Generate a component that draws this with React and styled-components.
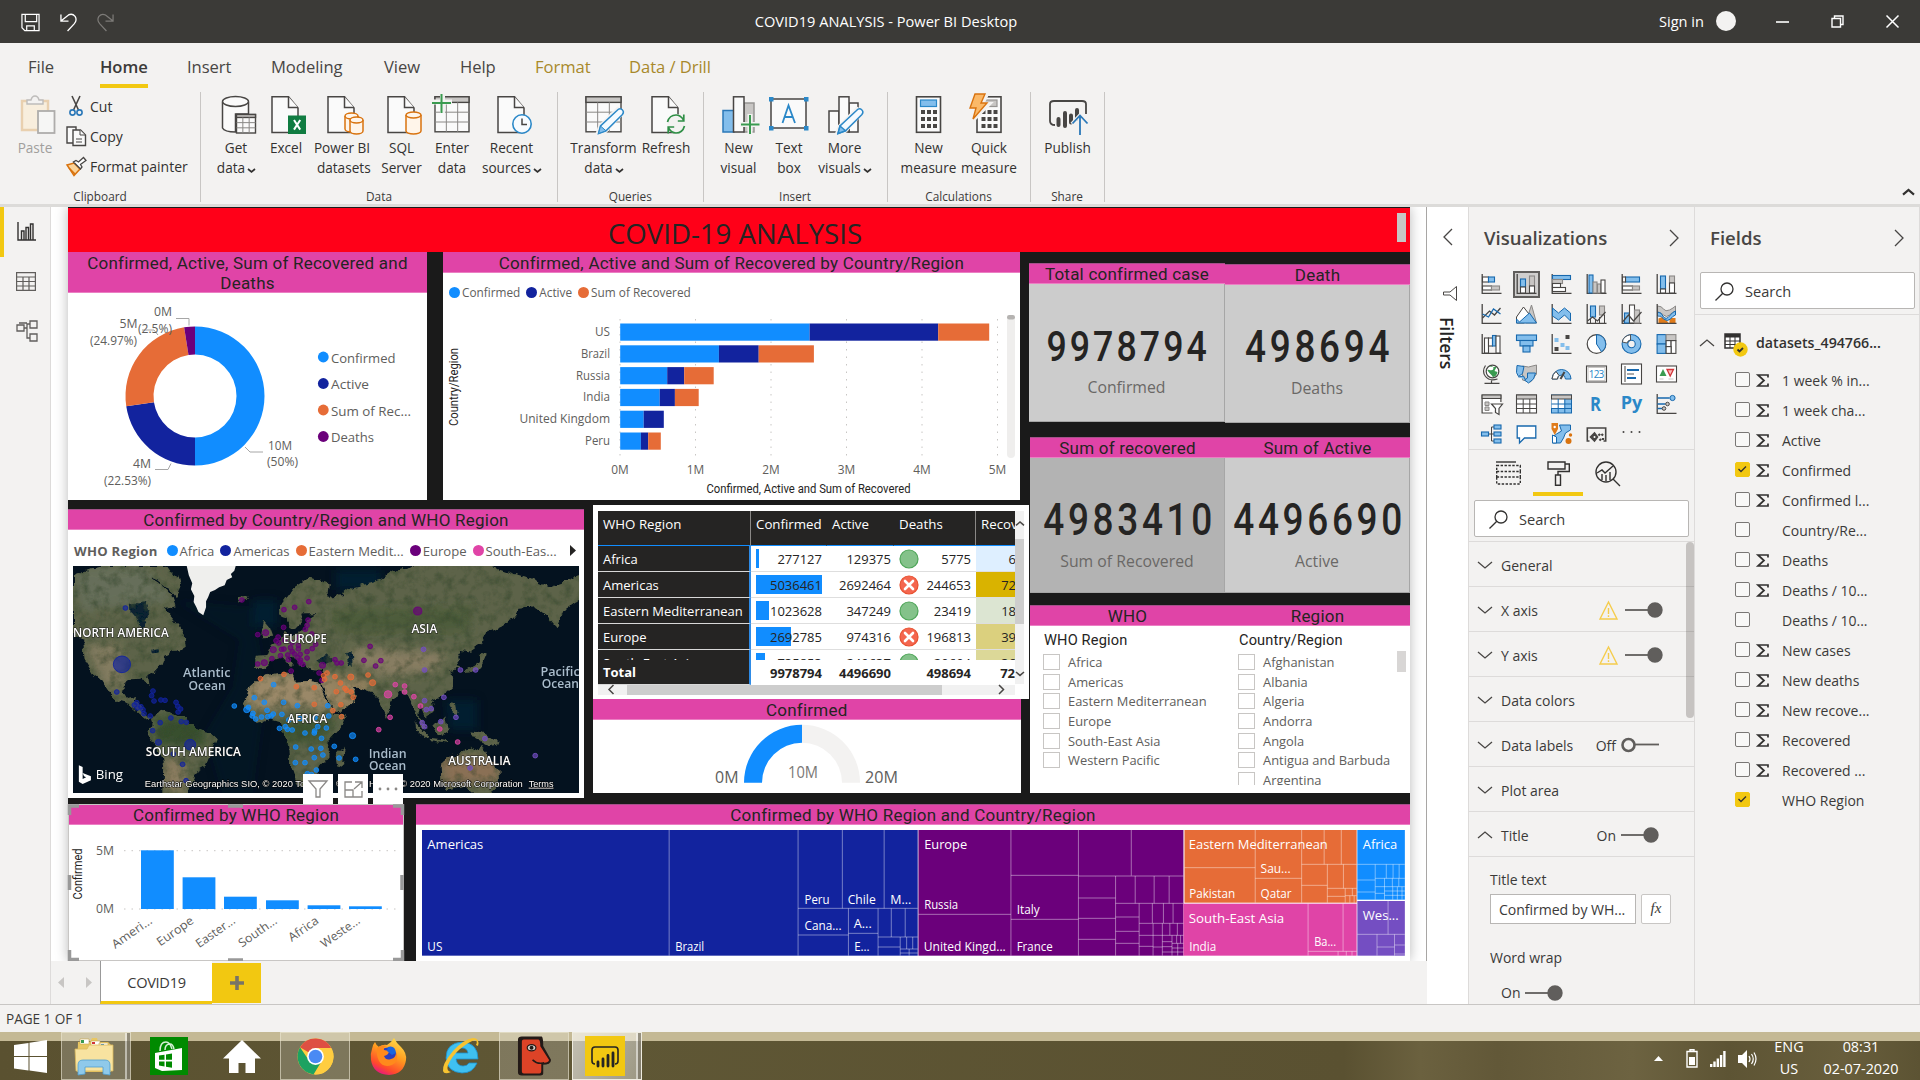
import React from "react";
import styled, { createGlobalStyle, css } from "styled-components";

const UI = `"Open Sans", "Noto Sans", sans-serif`;
const DIN = `Roboto, "Liberation Sans", sans-serif`;
const C = {
  blue: "#118dff", navy: "#12239e", orange: "#e66c37", purple: "#6b007b",
  pink: "#e044a7", violet: "#744ec2", ink: "#252423", grey: "#605e5c",
  pane: "#f3f2f1", line: "#dddbda", yellow: "#f2c811", page: "#1a1a1a",
};

const Global = createGlobalStyle`
  * { box-sizing: border-box; }
  body { margin: 0; background: ${C.pane}; font-family: ${UI}; color: ${C.ink}; overflow: hidden; }
  svg { display: block; overflow: visible; flex: none; }
`;

/* ---------- shell ---------- */
const Shell = styled.div`width: 1920px; height: 1080px; display: flex; flex-direction: column; overflow: hidden;`;
const TitleBar = styled.header`
  height: 43px; flex: none; background: #3b3a37; color: #fff; display: grid;
  grid-template-columns: 1fr auto 1fr; align-items: center; font-size: 14.6px; padding-bottom: 1px;
`;
const QuickTools = styled.div`display: flex; align-items: center; gap: 20px; padding: 3px 0 0 21px;`;
const Caption = styled.div`white-space: nowrap; transform: translateX(-74px);`;
const WindowTools = styled.div`display: flex; align-items: center; justify-content: flex-end; padding-right: 21px;`;
const Avatar = styled.span`width: 20px; height: 20px; border-radius: 50%; background: #f3f2f1; margin: 0 40px 0 12px;`;
const WinGlyph = styled.span`margin-left: ${p => p.$gap || 0}px;`;

const Ribbon = styled.section`height: 161px; flex: none; background: ${C.pane}; display: flex; flex-direction: column;`;
const Tabs = styled.nav`
  height: 48px; padding-left: 28px; display: grid; align-items: start;
  grid-template-columns: 72px 87px 84px 113px 76px 75px 94px auto;
  font-size: 16.6px; color: #484644;
`;
const Tab = styled.span`
  justify-self: start; height: 45px; line-height: 47px; white-space: nowrap; letter-spacing: -0.05px;
  color: ${p => (p.$gold ? "#a8892b" : "#484644")};
  ${p => p.$on && css`font-weight: 600; color: #3b3a39; border-bottom: 4px solid ${C.yellow}; letter-spacing: -0.1px;`}
`;
const Groups = styled.div`display: flex; height: 111px; padding-top: 1px; align-items: stretch;`;
const Group = styled.div`
  width: ${p => p.$w}px; border-right: 1px solid #c8c6c4; display: flex; flex-direction: column;
`;
const GroupBody = styled.div`height: 94px; flex: none; display: flex; padding-left: ${p => p.$pad}px;`;
const GroupName = styled.div`font-size: 11.8px; line-height: 20px; text-align: center; color: #3b3a39;`;
const BigButton = styled.div`
  width: ${p => p.$w}px; padding-top: 3px; display: flex; flex-direction: column; align-items: center;
  color: ${p => (p.$off ? "#a19f9d" : "#323130")};
`;
const BigLabel = styled.div`
  margin-top: 3px; font-size: 13.6px; line-height: 20.3px; text-align: center; white-space: pre;
  display: flex; flex-direction: column; align-items: center;
`;
const SmallList = styled.div`display: flex; flex-direction: column; padding-left: 5px;`;
const SmallButton = styled.div`
  height: 30px; display: flex; align-items: center; gap: 4px; font-size: 14px; white-space: nowrap; color: #323130; padding-bottom: 2px;
`;
const SmallIcon = styled.span`width: 21px; display: flex; justify-content: center;`;
const RibbonEnd = styled.div`flex: 1; display: flex; align-items: flex-end; justify-content: flex-end; padding: 0 6px 7px 0;`;

const Body = styled.main`
  flex: 1; min-height: 0; display: flex; border-top: 3px solid #dcdbd9;
`;
const Rail = styled.aside`width: 51px; flex: none; border-right: 1px solid ${C.line}; display: flex; flex-direction: column;`;
const RailItem = styled.div`
  height: 49.5px; display: flex; align-items: center; padding-left: ${p => (p.$on ? 13 : 16)}px;
  ${p => p.$on && css`border-left: 4px solid ${C.yellow};`}
`;
const Work = styled.div`width: 1376px; flex: none; display: flex; flex-direction: column;`;
const Stage = styled.div`
  height: 754px; background: #fff; padding: 0 16px 0 17px; border-right: 1px solid #a8a6a4; overflow: hidden;
`;
const PageTabs = styled.div`height: 43px; display: flex; align-items: stretch;`;
const PageArrows = styled.div`width: 49px; display: flex; align-items: center; gap: 22px; padding-left: 7px;`;
const PageTab = styled.div`
  width: 112px; background: #fff; border-bottom: 3px solid ${C.yellow}; border-left: 1px solid #999;
  font-size: 14.6px; color: #3b3a39; display: flex; align-items: center; justify-content: center; letter-spacing: -0.3px; padding-top: 2px;
`;
const AddPage = styled.div`
  width: 49px; margin: 2px 0 1px; background: ${C.yellow}; display: flex; align-items: center; justify-content: center;
`;
const StatusBar = styled.footer`
  height: 28px; flex: none; border-top: 1px solid #c8c6c4; background: ${C.pane}; color: #3b3a39;
  font-size: 13.6px; line-height: 28px; padding-left: 6px; letter-spacing: -0.05px;
`;

/* ---------- report page ---------- */
const Page = styled.div`
  width: 1342px; height: 754px; background: ${C.page}; box-shadow: 0 0 12px rgba(0,0,0,.28);
  display: flex; flex-direction: column; border-top: 1px solid #1a1a1a;
`;
const Banner = styled.div`
  height: 44px; flex: none; background: #ff0018; display: flex; justify-content: flex-end; align-items: flex-start;
`;
const BannerText = styled.div`flex: 1; text-align: center; font-size: 27.6px; line-height: 50px; padding-left: 5px;`;
const Thumb = styled.span`width: 9px; height: ${p => p.$h}px; margin: ${p => p.$m}; background: ${p => p.$c || "#c8c6c4"};`;
const Upper = styled.div`height: 552px; flex: none; display: flex;`;
const LeftArea = styled.div`width: 961px; display: flex; flex-direction: column;`;
const RowTop = styled.div`height: 248px; display: flex; gap: 16px;`;
const RowMid = styled.div`display: flex; gap: 9px; padding-top: 5px;`;
const Stack = styled.div`display: flex; flex-direction: column;`;
const RightArea = styled.div`width: 381px; display: flex; flex-direction: column; padding-top: 11px;`;
const Pair = styled.div`display: flex; margin-left: ${p => p.$ml || 0}px; margin-bottom: ${p => p.$mb || 0}px;`;
const LowerRow = styled.div`flex: 1; min-height: 0; display: flex; gap: 12px;`;

const Visual = styled.section`
  position: relative; width: ${p => p.$w}px; height: ${p => p.$h}px; margin-top: ${p => p.$mt || 0}px;
  background: ${p => p.$bg || "#fff"}; display: flex; flex-direction: column; flex: none;
`;
const VisualTitle = styled.h2`
  margin: 0; background: ${C.pink}; color: ${C.ink}; font: 400 17px/20px ${DIN};
  letter-spacing: 0.23px; text-align: center; padding: 1px ${p => p.$px || 0}px 0; white-space: ${p => (p.$wrap ? "normal" : "nowrap")};
  flex: none; border-bottom: 1px solid #eb7fc3; height: ${p => (p.$wrap ? 41 : 21)}px;
  box-shadow: ${p => (p.$line ? "inset 0 1px 0 #a5508a" : "none")};
`;

/* ---------- cards and slicers ---------- */
const CardBody = styled.div`flex: 1; display: flex; flex-direction: column; align-items: center; padding-top: 38px; border: 0 solid #a6a6a6; border-width: 0 1px 1px 0;`;
const CardNumber = styled.div`
  font: 500 ${p => p.$size}px/50px ${DIN}; letter-spacing: ${p => p.$ls}px; margin-right: -${p => p.$ls}px; color: ${C.ink};
  transform: scaleX(.85);
`;
const CardLabel = styled.div`font-size: 15.8px; line-height: 24px; margin-top: 3px; color: #6a6866;`;
const SlicerHead = styled.div`font: 400 14.6px/22px ${DIN}; padding: 3px 0 0 14px; letter-spacing: .15px;`;
const SlicerBody = styled.div`display: flex; height: 134px; overflow: hidden;`;
const SlicerList = styled.div`flex: 1; padding: 1px 0 0 13px;`;
const SlicerItem = styled.div`
  height: 19.7px; display: flex; align-items: center; gap: 8px; font-size: 12.9px; color: ${C.grey}; white-space: nowrap;
  &::before { content: ""; width: 15px; height: 14px; border: 1px solid #c8c6c4; background: #fff; flex: none; }
`;

/* ---------- matrix ---------- */
const Matrix = styled.div`padding: 6px 5px 0; display: flex;`;
const MatrixMain = styled.div`width: 417px; overflow: hidden;`;
const MatrixRows = styled.div`height: 114px; overflow: hidden;`;
const MatrixRow = styled.div`
  display: grid; grid-template-columns: 153px 76px 67px 82px 60px; height: ${p => p.$h || 26}px; font-size: 13px;
  ${p => p.$bold && css`font-weight: 700;`}
`;
const HeadCell = styled.div`
  background: ${C.ink}; color: #fff; padding: 0 0 8px 5px; display: flex; align-items: center; white-space: nowrap; font-size: 13.3px;
  border-right: 1px solid ${p => (p.$sep ? "#8a8886" : C.ink)}; border-bottom: 1px solid ${C.blue};
`;
const RowHead = styled.div`
  background: ${C.ink}; color: #fff; display: flex; align-items: center; padding: 1px 0 0 5px; white-space: nowrap;
  border-right: 2px solid #2e8be6; border-bottom: 1px solid #d8d8d8;
`;
const Cell = styled.div`
  display: flex; align-items: center; justify-content: flex-end; padding: 1px ${p => (p.$pr == null ? 5 : p.$pr)}px 0 0; position: relative;
  border-bottom: ${p => (p.$plain ? 0 : 1)}px solid #dedede; background: ${p => p.$bg || "transparent"};
`;
const CellText = styled.span`position: relative;`;
const DataBar = styled.i`position: absolute; left: 5px; top: 3px; height: 19px; background: ${C.blue};`;
const Mark = styled.span`margin-right: auto; margin-left: 5px;`;
const VScroll = styled.div`width: 9px; height: 173px; background: #f1f1f1; display: flex; flex-direction: column; align-items: center; justify-content: space-between; padding: 11px 0 9px;`;
const VThumb = styled.i`width: 9px; height: 85px; background: #cdcdcd; margin: 0 0 34px;`;
const HScroll = styled.div`width: 417px; height: 10px; margin: 0 5px; background: #f1f1f1; display: flex; align-items: center; justify-content: space-between; padding: 0 12px 0 11px;`;
const HThumb = styled.i`width: 315px; height: 10px; background: #cdcdcd; margin-left: -44px;`;

/* ---------- map ---------- */
const MapLegend = styled.div`
  height: 36px; padding: 5px 8px 0 6px; display: flex; align-items: center; font-size: 13.1px; color: ${C.grey}; white-space: nowrap;
  b { margin-right: 9px; letter-spacing: .25px; }
`;
const LegendKey = styled.span`
  display: flex; align-items: center; margin-right: ${p => p.$mr || 6}px;
  &::before { content: ""; width: 11px; height: 11px; border-radius: 50%; background: ${p => p.$c}; margin-right: 2px; }
`;
const MapFrame = styled.div`margin: 0 5px 0 5px; height: 227px; overflow: hidden;`;
const BarLegend = styled.div`
  display: flex; height: 27px; flex: none; padding: 11px 0 0 6px; font-size: 11.8px; line-height: 17px; color: ${C.grey};
`;
const HoverTools = styled.div`position: absolute; left: 235px; top: -30px; display: flex; gap: 5px;`;
const HoverTool = styled.span`width: 30px; height: 30px; background: #fff; display: flex; align-items: center; justify-content: center;`;
const Handles = styled.div`position: absolute; inset: 0;`;

/* ---------- side panes ---------- */
const Filters = styled.aside`width: 42px; background: #fff; display: flex; flex-direction: column; align-items: center; padding-top: 22px; border-right: 1px solid ${C.line}; height: 797px;`;
const FiltersWord = styled.div`writing-mode: vertical-rl; font-weight: 600; font-size: 17.6px; line-height: 20px; margin-top: 16px; margin-right: 2px;`;
const FilterGlyph = styled.div`margin: 41px 0 0 5px;`;
const Pane = styled.aside`width: ${p => p.$w}px; flex: none; border-right: 1px solid ${C.line}; display: flex; flex-direction: column;`;
const PaneHead = styled.div`
  height: 62px; flex: none; display: flex; align-items: center; justify-content: space-between; padding: 0 16px 1px 15px;
  font-size: 18.6px; font-weight: 600; color: #484644;
`;
const IconGrid = styled.div`
  display: grid; grid-template-columns: repeat(6, 35px); grid-auto-rows: 30px; padding-left: 5px; height: 180px;
  justify-items: center; align-items: center;
`;
const IconSlot = styled.span`
  width: 27px; height: 27px; display: flex; align-items: center; justify-content: center;
  ${p => p.$on && css`background: #d0cfce; border: 2px solid ${C.grey};`}
`;
const PaneTabs = styled.div`height: 47px; border-top: 1px solid ${C.line}; display: flex; padding-left: 14px; flex: none;`;
const PaneTab = styled.span`
  width: 50px; display: flex; justify-content: center; padding-top: 11px;
  ${p => p.$on && css`border-bottom: 4px solid ${C.yellow};`}
`;
const Search = styled.div`
  height: 37px; margin: ${p => p.$m}; background: #fff; border: 1px solid #b8b6b4; border-radius: 2px; flex: none;
  display: flex; align-items: center; gap: 11px; padding: 1px 0 0 14px; font-size: 14.6px; color: #3b3a39;
`;
const FormatList = styled.div`position: relative; border-top: 1px solid ${C.line}; flex: 1; min-height: 0; overflow: hidden;`;
const FormatScroll = styled.i`position: absolute; right: 0; top: 0; width: 8px; height: 176px; background: #d0cecd; border-radius: 4px; mix-blend-mode: multiply;`;
const FormatRow = styled.div`
  height: 45px; border-bottom: 1px solid ${C.line}; display: flex; align-items: center; padding: 2px ${p => p.$pr || 35}px 0 9px; font-size: 14px;
`;
const RowName = styled.span`flex: 1; padding-left: 9px; color: #3b3a39;`;
const RowState = styled.span`margin-right: 5px; font-size: 14px; color: #3b3a39;`;
const WarnSlot = styled.span`margin-right: 7px;`;
const SubPanel = styled.div`padding: 12px 0 0 21px; font-size: 14px; color: #3b3a39;`;
const SubLabel = styled.div`line-height: 21px;`;
const FieldLine = styled.div`display: flex; gap: 5px; margin: 4px 0 23px;`;
const TextInput = styled.div`width: 146px; height: 30px; border: 1px solid #b8b6b4; background: #fff; padding-left: 8px; line-height: 29px; font-size: 14.1px; letter-spacing: -.05px; white-space: nowrap;`;
const FxButton = styled.div`width: 30px; height: 30px; border: 1px solid #c8c6c4; border-radius: 2px; background: #fff; text-align: center; font: italic 15px/26px "Liberation Serif", serif;`;
const WrapLine = styled.div`display: flex; align-items: center; padding: 15px 0 0 11px;`;

const FieldsBody = styled.div`border-top: 1px solid ${C.line}; padding-top: 12px;`;
const Dataset = styled.div`
  height: 31px; display: flex; align-items: center; padding-left: 5px; font-weight: 600; font-size: 14.2px; letter-spacing: 0; color: #323130; margin-bottom: 7px;
`;
const DatasetIcon = styled.span`margin: 5px 8px 0 10px;`;
const FieldRow = styled.div`height: 30px; display: flex; align-items: center; padding-left: 40px; font-size: 14px; color: #3b3a39;`;
const Check = styled.span`
  width: 15px; height: 15px; border: 1.4px solid #797775; border-radius: 2px; margin-bottom: 1px; background: #f8f8f7;
  ${p => p.$on && css`background: ${C.yellow}; border-color: ${C.yellow};`}
`;
const Sigma = styled.span`width: 32px; padding-left: 7px;`;

/* ---------- taskbar ---------- */
const Taskbar = styled.footer`
  height: 48px; flex: none; border-top: 9px solid #c4b995; color: #fff; display: flex; justify-content: space-between;
  background: linear-gradient(90deg, #5a5130 0%, #5f5735 30%, #5a5131 70%, #6b613f 74%, #625838 78%, #6d6341 85%, #5d5434 90%, #685e3c 96%, #5c5333 100%);
`;
const Apps = styled.div`display: flex; align-items: stretch; margin-top: -9px;`;
const AppSlot = styled.div`
  width: ${p => p.$w}px; margin-left: ${p => p.$ml || 0}px; height: 48px; display: flex; align-items: center; justify-content: center;
  ${p => p.$open && css`background: rgba(255,255,255,.2); border: 1px solid rgba(235,230,210,.6);`}
  ${p => p.$active && css`background: linear-gradient(115deg, rgba(255,255,255,.62), rgba(255,255,255,.38)); border: 1px solid #efece0;`}
  ${p => p.$stack && css`box-shadow: inset -4px 0 0 -1px rgba(60,52,30,.5), inset -5px 0 0 rgba(255,255,255,.5); padding-right: 4px;`}
`;
const Tray = styled.div`display: flex; align-items: center; margin-top: -7px; padding-right: 18px;`;
const TrayIcons = styled.div`display: flex; align-items: center; gap: 12px; margin-right: 17px; padding-top: 3px;`;
const TrayArrow = styled.span`margin-right: 11px;`;
const TrayText = styled.div`font-size: 14.4px; line-height: 22px; text-align: center; width: ${p => p.$w}px; margin-left: ${p => p.$ml || 0}px; margin-top: 1px;`;

/* ---------- small glyphs ---------- */
const Chevron = ({ d = "down", w = 14, s = "#484644", sw = 1.3 }) => {
  const paths = { down: "M0 0l7 6 7-6", up: "M0 6l7-6 7 6", left: "M7 0L0 7l7 7", right: "M0 0l7 7-7 7" };
  const tall = d === "left" || d === "right";
  const k = w / (tall ? 7 : 14);
  return (
    <svg width={w} height={(tall ? 14 : 6) * k} viewBox={tall ? "0 0 7 14" : "0 0 14 6"} fill="none" stroke={s} strokeWidth={sw / k}>
      <path d={paths[d]} />
    </svg>
  );
};
const Magnifier = () => (
  <svg width="19" height="19" viewBox="0 0 19 19" fill="none" stroke="#323130" strokeWidth="1.3">
    <circle cx="12" cy="7" r="6" /><path d="M7.8 11.2L.5 18.5" />
  </svg>
);
const Toggle = ({ on = true }) => (
  <svg width="38" height="16" viewBox="0 0 38 16" fill="none" stroke={C.grey} strokeWidth="1.8">
    {on ? <><path d="M0 8h24" /><circle cx="30" cy="8" r="6.8" fill={C.grey} /></> : <><circle cx="7.5" cy="8" r="6" strokeWidth="2.6" /><path d="M14 7.5h24" /></>}
  </svg>
);
const Warning = () => (
  <svg width="19" height="19" viewBox="0 0 19 19" fill="none" stroke="#f5cc4c" strokeWidth="1.4">
    <path d="M9.5 1L18 18H1z" /><path d="M9.5 7v6M9.5 14.3v1.6" />
  </svg>
);

/* ---------- ribbon icons (40 x 40 grid) ---------- */
const K = "#484644";
const Doc = () => (<g fill="#fafafa" stroke={K} strokeWidth="1.5"><path d="M6 1.8H22.5L32 13V37.5H6z" /><path d="M22.5 1.8V12.5H32" /></g>);
const Cyl = ({ x, y, w = 13, h = 19 }) => (
  <g fill="#fff5ea" stroke="#d9730f" strokeWidth="1.5">
    <path d={`M${x} ${y + 3}v${h - 6}a${w / 2} 3 0 0 0 ${w} 0v-${h - 6}`} /><ellipse cx={x + w / 2} cy={y + 3} rx={w / 2} ry="3" />
  </g>
);
const Grid40 = ({ x, y, w, h }) => (
  <g fill="none" stroke={K} strokeWidth="1.4">
    <rect x={x} y={y} width={w} height={h} fill="#fafafa" /><rect x={x} y={y} width={w} height={h * 0.16} fill="#c8c6c4" />
    <path strokeWidth="1" stroke="#8a8886" d={`M${x + w / 3} ${y + h * 0.16}V${y + h}M${x + (w * 2) / 3} ${y + h * 0.16}V${y + h}M${x} ${y + h * 0.44}h${w}M${x} ${y + h * 0.72}h${w}`} />
  </g>
);
const Pencil = ({ x = 0 }) => (
  <g transform={`translate(${x} 0)`}>
    <path d="M32 14l5 3.5L20 36l-8 3 2.5-7.5z" fill="#f4faff" stroke="#f3f2f1" strokeWidth="4" />
    <path d="M31.5 15.5q2.8-3 5.2-.8t0 5L20.5 35.8l-7.5 2.7 2-7.5z" fill="#f4faff" stroke="#2b88c8" strokeWidth="1.5" />
    <path d="M15 31l5.5 4.8-7.5 2.7z" fill="#83beec" stroke="#2b88c8" />
  </g>
);
const Calc = ({ x = 8, top = "#83beec", ts = "#2b88c8" }) => (
  <g transform={`translate(${x} 0)`}>
    <rect x="0" y="1.8" width="24" height="35.5" fill="#fafafa" stroke={K} strokeWidth="1.6" /><rect x="4" y="5" width="16" height="6.5" fill={top} stroke={ts} strokeWidth="1.2" />
    {[15, 22, 29].map(y => [4.5, 10.5, 16.5].map(a => <rect key={y + "-" + a} x={a} y={y} width="4" height="4" fill={K} />))}
  </g>
);
const RIcons = {
  paste: <g opacity=".5"><path d="M7 6H33V35H7z" fill="#fdeccb" stroke="#e0b070" strokeWidth="2.4" /><path d="M12 9V5h4q1-4 4-4t4 4h4v4z" fill="#f3f2f1" stroke="#8a8886" strokeWidth="1.4" /><rect x="23" y="16" width="16.500" height="22" fill="#fafafa" stroke="#6b6967" strokeWidth="1.8" /></g>,
  get: <g><path d="M6.5 7V33q2 4 13 4V19h13V7" fill="#fafafa" stroke={K} strokeWidth="1.5" /><ellipse cx="19.5" cy="6.5" rx="13" ry="5" fill="#fafafa" stroke={K} strokeWidth="1.5" /><Grid40 x={20.5} y={19.5} w={19} h={18.5} /></g>,
  excel: <g><Doc /><rect x="22" y="20.5" width="18" height="18.5" fill="#107c41" /><path d="M28 25l6.2 9.6M34.2 25l-6.2 9.6" stroke="#fff" strokeWidth="2" fill="none" /></g>,
  pbi: <g><Doc /><Cyl x={23} y={18} /><Cyl x={28} y={22} w={13} h={17} /></g>,
  sql: <g><Doc /><Cyl x={24} y={17} w={15} h={22} /></g>,
  enter: <g><Grid40 x={3} y={1.8} w={34} h={35} /><path d="M2 7h18M10.500 0v18" stroke="#f3f2f1" strokeWidth="5" /><path d="M0 8h19M9.500-1v19" stroke="#3a9b50" strokeWidth="2" /></g>,
  recent: <g><Doc /><circle cx="30" cy="29" r="9.200" fill="#f7fbff" stroke="#2b88c8" strokeWidth="1.6" /><path d="M30 23.500V29.500h5" fill="none" stroke={K} strokeWidth="1.5" /></g>,
  transform: <g><Grid40 x={2} y={1.8} w={35} h={35} /><Pencil x={1.5} /></g>,
  refresh: <g><Doc /><circle cx="31" cy="29" r="10" fill="#f3f2f1" /><path d="M21.500 27q2-7 8.500-7 4.500 0 7.500 5M37.800 19.500V26h-6M38.500 31q-2 7-8.500 7-4.500 0-7.500-5M22.200 38.500V32h6" fill="none" stroke="#2f8f46" strokeWidth="1.7" /></g>,
  newvisual: <g strokeWidth="1.5"><rect x="4" y="15.500" width="11" height="21.500" fill="#83beec" stroke="#2b78b8" /><rect x="25" y="8" width="10" height="29" fill="#c8c6c4" stroke="#979593" /><rect x="14.500" y="1.800" width="10.500" height="35.200" fill="#fafafa" stroke={K} /><path d="M21 29.500h20M31 19v20" stroke="#f3f2f1" strokeWidth="5" /><path d="M22 29.500h18.500M31 20v19" stroke="#3a9b50" strokeWidth="2" /></g>,
  textbox: <g><rect x="2" y="4" width="35" height="29" fill="#fafafa" stroke={K} strokeWidth="1.5" />{[[2, 4], [37, 4], [2, 33], [37, 33]].map(([x, y]) => <rect key={x + "-" + y} x={x - 2} y={y - 2} width="4.500" height="4.500" fill="#2b88c8" />)}<path d="M13.500 28L19.500 10.500 26 28M15.500 22h8" fill="none" stroke="#2b88c8" strokeWidth="1.8" /></g>,
  more: <g strokeWidth="1.5" fill="#fafafa" stroke={K}><rect x="4" y="16" width="10" height="21" /><rect x="24" y="8" width="9" height="29" /><rect x="14" y="1.800" width="10" height="35.200" /><Pencil /></g>,
  newmeasure: <Calc x={7.5} />,
  quick: <g><Calc x={8} top="#c8c6c4" ts="#979593" /><path d="M8-1h10l-5 10h7L4 25l4-11H2z" fill="#fbb968" stroke="#f3f2f1" strokeWidth="4" /><path d="M6-1h10l-4 9h6L4 24l3-11H1z" fill="#fbb968" stroke="#d9730f" strokeWidth="1.4" /></g>,
  publish: <g fill="none" stroke={K}><path d="M7 30q-5 0-5-4V9q0-3 4-3H34q4 0 4 3v10" strokeWidth="1.8" /><path d="M10.500 24v6M17 18v13M23 20.500v7M29 15v9" strokeWidth="4" strokeLinecap="round" /><path d="M32 40V21M24 29l8-8.500 8 8.500" stroke="#f3f2f1" strokeWidth="4" /><path d="M32 40V20.500M24.500 28.500l7.500-8 7.500 8" stroke="#2b78b8" strokeWidth="1.8" /></g>,
};
const ChevBox = styled.span`display: inline-block; margin-left: 3px; vertical-align: 1px;`;
const ChevInline = () => <ChevBox><Chevron w={7} sw={1.7} s="#323130" /></ChevBox>;
const Big = ({ icon, w, lines, menu, off }) => (
  <BigButton $w={w} $off={off}>
    <svg width="40" height="40" viewBox="0 0 40 40">{RIcons[icon]}</svg>
    <BigLabel>
      {lines.map((l, i) => (
        <span key={l}>{l}{menu && i === lines.length - 1 && <ChevInline />}</span>
      ))}
    </BigLabel>
  </BigButton>
);

const GROUPS = [
  { name: "Data", w: 357, pad: 10, items: [["get", 50, ["Get", "data"], 1], ["excel", 50, ["Excel"]], ["pbi", 62, ["Power BI", " datasets"]], ["sql", 57, ["SQL", "Server"]], ["enter", 44, ["Enter", "data"]], ["recent", 75, ["Recent", "sources"], 1]] },
  { name: "Queries", w: 145.5, pad: 8, items: [["transform", 75, ["Transform", "data"], 1], ["refresh", 50, ["Refresh"]]] },
  { name: "Insert", w: 184, pad: 10, items: [["newvisual", 50, ["New", "visual"]], ["textbox", 51, ["Text", "box"]], ["more", 60, ["More", "visuals"], 1]] },
  { name: "Calculations", w: 143, pad: 10, items: [["newmeasure", 62, ["New", "measure"]], ["quick", 59, ["Quick", "measure"]]] },
  { name: "Share", w: 74, pad: 7, items: [["publish", 60, ["Publish"]]] },
];

/* ---------- visualization pane icons (20 x 20 grid) ---------- */
const B = "#83beec", D = "#1768ad", S = "#c8c6c4";
const Axis = () => <path d="M.7 0V19.300H20" fill="none" stroke={K} strokeWidth="1.3" />;
const R = ({ b, g, ...r }) => <rect {...r} fill={b ? B : g ? S : "#fff"} stroke={b ? D : g ? "#8a8886" : K} strokeWidth="1.1" />;
const VIZ = [
  <g><Axis /><R x="1" y="3" width="6" height="5" /><R b x="7" y="3" width="6" height="5" /><R x="1" y="12" width="9" height="4" /><R g x="10" y="12" width="8" height="4" /></g>,
  <g><Axis /><R b x="4" y="5" width="5" height="8" /><R x="4" y="13" width="5" height="6" /><R g x="13" y="2" width="5" height="10" /><R x="13" y="12" width="5" height="7" /></g>,
  <g><Axis /><R b x="1" y="1.500" width="18" height="4" /><R g x="1" y="5.500" width="10" height="4" /><R x="1" y="9.500" width="8" height="4" /><R x="1" y="13.500" width="13" height="4" /></g>,
  <g><Axis /><R b x="2.500" y="1" width="4" height="18" /><R g x="6.500" y="8" width="4" height="11" /><R g x="11" y="10" width="3.500" height="9" /><R x="14.500" y="6" width="4" height="13" /></g>,
  <g><Axis /><R b x="4" y="3" width="14" height="5" /><R x="1" y="3" width="3" height="5" /><R x="1" y="12" width="10" height="4" /><R g x="11" y="12" width="7" height="4" /></g>,
  <g><Axis /><R b x="4" y="2" width="5" height="13" /><R x="4" y="15" width="5" height="4" /><R g x="13" y="2" width="5" height="7" /><R x="13" y="9" width="5" height="10" /></g>,
  <g><Axis /><path d="M1 14L8 7l5 4 6-7" fill="none" stroke={K} strokeWidth="1.300" /><path d="M1 10l6 3 5-8 7 5" fill="none" stroke={D} strokeWidth="1.300" /></g>,
  <g><path d="M9 19L15 1l5 18z" fill={S} stroke="#8a8886" /><path d="M0 13L7 3l7 9-6 7H0z" fill="#fff" stroke={K} /><path d="M0 19V15l3 3L13 9l7 10z" fill={B} stroke={D} /></g>,
  <g><Axis /><path d="M1 4l6 5 6-5 6 5v8l-6-6-6 5-6-4z" fill={B} stroke={D} /></g>,
  <g><Axis /><R b x="4" y="2" width="5" height="11" /><R g x="13" y="2" width="5" height="9" /><path d="M1 17l5-4 5 4 8-9" fill="none" stroke={K} strokeWidth="1.200" /><path d="M4 19v-4M9 19v-4M13 19v-6M18 19v-8" stroke={K} /></g>,
  <g><Axis /><R b x="3" y="9" width="5" height="10" /><R x="8" y="1" width="5" height="18" /><R g x="13" y="6" width="5" height="13" /><path d="M1 18l6-7 5 6 8-9" fill="none" stroke={K} strokeWidth="1.200" /></g>,
  <g><path d="M2 14.500l5-2 5 6.500H2zM13 14h6v5h-6z" fill="#e07b1a" /><path d="M1 2q4 0 6 3t6 1 6-4v5q-3 1-6 4t-6 0-6-3z" fill={S} stroke="#8a8886" /><path d="M1 8q4 0 6 5 3 3 6-1t6-5v4q-3 1-5 4-3 3-7 0-2-4-6-3z" fill={B} stroke={D} /><Axis /></g>,
  <g><Axis /><R x="3" y="4" width="4" height="15" /><R x="7" y="4" width="4" height="8" /><R b x="11" y="1.500" width="3.500" height="10.500" /><R x="14.500" y="2" width="4" height="17" /></g>,
  <g><R b x="0" y="1" width="20" height="5.500" /><R b x="3.500" y="6.500" width="13" height="5.500" /><R b x="6.500" y="12" width="7" height="6" /></g>,
  <g><Axis /><rect x="3" y="4" width="4" height="4" fill={B} /><rect x="14" y="1" width="4" height="4" fill={K} /><rect x="9" y="9" width="4" height="4" fill={B} /><rect x="3" y="13" width="4" height="4" fill={K} /><rect x="14" y="12" width="4" height="4" fill={B} /></g>,
  <g><circle cx="10" cy="10" r="9.300" fill="#fff" stroke={K} strokeWidth="1.200" /><path d="M10 10V.7a9.300 9.300 0 0 1 5 17z" fill={B} stroke={D} /></g>,
  <g><circle cx="10" cy="10" r="6.600" fill="none" stroke={D} strokeWidth="6.800" /><circle cx="10" cy="10" r="6.600" fill="none" stroke={B} strokeWidth="4.700" /><path d="M.8 8q1-6 8.200-7.300v5.300q-2.500 0-3.500 3z" fill="#fff" stroke={K} strokeWidth=".9" /></g>,
  <g><R b x=".6" y=".6" width="9" height="9.400" /><R b x=".6" y="10" width="9" height="9.400" /><R g x="9.600" y=".6" width="9.800" height="6" /><R x="9.600" y="6.600" width="5" height="6" /><R x="14.600" y="6.600" width="4.800" height="12.800" /><R x="9.600" y="12.600" width="5" height="6.800" /></g>,
  <g fill="none" stroke={K} strokeWidth="1.200"><circle cx="11" cy="7.500" r="6.300" fill="#fff" /><path d="M7 3q5-2 5 1t-4 2 0 3 3 4q4 0 5-5l-3-1 2-4z" fill="#3a9b50" stroke="none" /><path d="M4 1.500q-4 6 0 11t12 2.500M10 16.500v2.500M3 19.400h15" /></g>,
  <g><path d="M6 2l6 1 8-2v9l-6 8-8-2z" fill={S} stroke="#8a8886" /><path d="M.5 1.500l7 1-1.500 7-4 3-2-4zM11 9l8 0-2 6-5 4-4-3 3-2z" fill={B} stroke={D} /><path d="M2 13l5-1 2 4" fill={B} stroke={D} /></g>,
  <g><path d="M.5 15A9.500 9.500 0 0 1 19.500 15H14a4 4 0 0 0-8 0z" fill={B} stroke={D} /><path d="M.5 15q.5-5 4-7.500l3 4q-1.500 1-1.500 3.500z" fill="#fff" stroke={K} /><path d="M9 15l4-7" stroke={K} strokeWidth="2" /></g>,
  <g><R x="0" y="2" width="20" height="16" /><rect x="1.500" y="3.500" width="17" height="13" fill="#fff" stroke={S} /><text x="10" y="14" fontSize="10" textAnchor="middle" fill="#2b88c8" fontFamily="Open Sans" textLength="15.500">123</text></g>,
  <g><R x="0" y="0" width="20" height="20" /><path d="M3.500 2v16" stroke={K} strokeWidth="1" /><path d="M5.500 6h12M5.500 14h9" stroke={D} strokeWidth="2" /><path d="M5.500 10h7" stroke="#555" strokeWidth="1" /></g>,
  <g><R x="0" y="2" width="20" height="16" /><path d="M3 12l3.500-7 3.500 7z" fill="#3a9b50" /><path d="M10.500 5.500h6.500L13.700 12z" fill="#f7b9b9" stroke="#d13438" strokeWidth="1.300" /><path d="M3 15h4M12 15h5" stroke={S} /></g>,
  <g><path d="M11 19H.6V1H19.400V8" fill="#fff" stroke={K} strokeWidth="1.200" /><rect x=".6" y="1" width="18.800" height="3.500" fill={S} stroke={K} /><path d="M3.500 8h4v3.500h-4zM3.500 13h4v3.500h-4z" fill={S} stroke="#8a8886" /><path d="M10 10h11l-3.500 4.500v6l-3.500-2v-4z" fill="#fff" stroke={K} strokeWidth="1.200" /></g>,
  <g><R x="0" y="1" width="20" height="18" /><rect x="0" y="1" width="20" height="4" fill={S} stroke={K} /><path d="M6.700 5v14M13.300 5v14M0 10h20M0 14.500h20" stroke={K} /></g>,
  <g><rect x="0" y="1" width="20" height="18" fill={B} stroke={D} /><rect x="0" y="5" width="13" height="9" fill="#fff" /><rect x="0" y="1" width="20" height="4" fill={S} stroke={K} /><path d="M6.700 5v14M13.300 5v14M0 10h20M0 14.500h20" stroke={D} /></g>,
  <text x="9" y="17" fontSize="19" fontWeight="700" textAnchor="middle" fill="#2b88c8" fontFamily="Open Sans" textLength="11" lengthAdjust="spacingAndGlyphs">R</text>,
  <text x="10" y="15" fontSize="18" fontWeight="700" textAnchor="middle" fill="#2b88c8" fontFamily="Open Sans">Py</text>,
  <g><Axis /><path d="M1 4h12M1 10h8M1 14.500h5" stroke={D} strokeWidth="1.500" /><circle cx="16" cy="4" r="2.600" fill={B} stroke={D} /><circle cx="11" cy="10" r="1.800" fill={S} stroke={K} /><circle cx="7.500" cy="14.500" r="1.800" fill={S} stroke={K} /></g>,
  <g><path d="M6 10h8M10 3v14M10 3h4M10 17h4" stroke={K} fill="none" /><R b x="0" y="8" width="7" height="4" /><R b x="12.500" y="1" width="7" height="4" /><R b x="12.500" y="8" width="7" height="4" /><R b x="12.500" y="15" width="7" height="4" /></g>,
  <path d="M.7 2H19.300V14H8l-5 5v-5H.7z" fill="#fff" stroke={D} strokeWidth="1.300" />,
  <g><path d="M8 1h11v5l-5 3-2 5-3 5H1v-6l4-3 5-3z" fill={B} stroke={D} /><path d="M1 11l4 2v6H1z" fill="#fff" stroke={D} /><path d="M0-1h6.500v6L3.300 11 0 5z" fill="#e07b1a" /><circle cx="3.200" cy="3" r="1.200" fill="#fff" /><circle cx="17" cy="17" r="3" fill="#d9730f" /><circle cx="19" cy="11" r="1.700" fill="#d9730f" /></g>,
  <g fill="none" stroke={K} strokeWidth="1.600"><path d="M3 17H.8V4h18.400v13H17" /><path d="M8 9l3 4-3 4-4-4z" fill={K} /><circle cx="8" cy="13" r="1" fill="#fff" stroke="none" /><path d="M12 10l1.500 1.500M15 11.500l1.500-1.500M13 15l1.500 1.500M16.500 14v2" strokeWidth="2.300" /></g>,
  <g fill={K}><circle cx="2" cy="8" r="1" /><circle cx="10" cy="8" r="1" /><circle cx="18" cy="8" r="1" /></g>,
];

const FORMAT = [["General"], ["X axis", "warn"], ["Y axis", "warn"], ["Data colors"], ["Data labels", "Off"], ["Plot area"], ["Title", "On"]];
const FIELDS = [["1 week % in...", 1], ["1 week cha...", 1], ["Active", 1], ["Confirmed", 1, 1], ["Confirmed l...", 1], ["Country/Re..."], ["Deaths", 1], ["Deaths / 10...", 1], ["Deaths / 10..."], ["New cases", 1], ["New deaths", 1], ["New recove...", 1], ["Recovered", 1], ["Recovered ...", 1], ["WHO Region", 0, 1]];

/* ---------- charts ---------- */
const pt = (cx, cy, r, a) => [cx + r * Math.sin((a * Math.PI) / 180), cy - r * Math.cos((a * Math.PI) / 180)];
const ring = (cx, cy, r1, r2, a, b) => {
  const big = b - a > 180 ? 1 : 0;
  const [p, q, s, t] = [pt(cx, cy, r1, a), pt(cx, cy, r1, b), pt(cx, cy, r2, b), pt(cx, cy, r2, a)];
  return `M${p}A${r1} ${r1} 0 ${big} 1 ${q}L${s}A${r2} ${r2} 0 ${big} 0 ${t}Z`;
};
const Label = ({ x, y, w, a = "start", size = 12, fill = C.grey, font = UI, ...rest }) => (
  <text x={x} y={y} fontSize={size} fill={fill} fontFamily={font} textAnchor={a} {...(w ? { textLength: w, lengthAdjust: "spacingAndGlyphs" } : {})} {...rest} />
);

const Donut = () => (
  <svg width="359" height="207" viewBox="68 293 359 207">
    <path d={ring(195, 396, 69.500, 41.500, 0, 180)} fill={C.blue} />
    <path d={ring(195, 396, 69.500, 41.500, 180, 261.500)} fill={C.navy} />
    <path d={ring(195, 396, 69.500, 41.500, 261.500, 351)} fill={C.orange} />
    <path d={ring(195, 396, 69.500, 41.500, 351, 360)} fill={C.purple} />
    <g fill="none" stroke="#a6a6a6"><path d="M176 318.500h13v7" /><path d="M142 330h12l4 5" /><path d="M155 469.500h13l3-6" /><path d="M245 447l5 5h13" /></g>
    <Label x="172" y="315.500" a="end" w={18}>0M</Label><Label x="172" y="333" a="end" w={34}>(2.5%)</Label>
    <Label x="137.500" y="328" a="end" w={18}>5M</Label><Label x="137" y="345" a="end" w={47}>(24.97%)</Label>
    <Label x="151" y="468" a="end" w={18}>4M</Label><Label x="151" y="485" a="end" w={47}>(22.53%)</Label>
    <Label x="268" y="450" w={24}>10M</Label><Label x="267" y="466" w={31}>(50%)</Label>
    {[["Confirmed", C.blue, 357, 64.500], ["Active", C.navy, 383.500, 38], ["Sum of Rec...", C.orange, 410, 80], ["Deaths", C.purple, 436.500, 43]].map(([t, c, y, w]) => (
      <g key={t}><circle cx="323.300" cy={y} r="5.400" fill={c} /><Label x="331" y={y + 5.800} size={13} w={w}>{t}</Label></g>
    ))}
  </svg>
);

const BARS = [["US", 189.400, 318, 369, 15], ["Brazil", 98.700, 138.500, 193.700, 29], ["Russia", 47, 64, 93.500, 34], ["India", 39.500, 54.700, 78.500, 27], ["United Kingdom", 23.500, 43.600, 43.600, 90.500], ["Peru", 20.700, 28, 40.600, 25]];
const StackedBars = () => (
  <svg width="577" height="200" viewBox="443 300 577 200">
    {[0, 1, 2, 3, 4, 5].map(i => (
      <g key={i}>
        <path d={`M${620 + 75.500 * i} 319V458`} stroke="#c8c6c4" strokeDasharray="1.500 6" />
        <Label x={620 + 75.500 * i} y="474.300" a="middle" w={17.500}>{i + "M"}</Label>
      </g>
    ))}
    {BARS.map(([n, a, b, c, w], i) => {
      const y = 323.500 + 21.800 * i;
      return (
        <g key={n}>
          <rect x="620.200" y={y} width={a} height="17.200" fill={C.blue} /><rect x={620.200 + a} y={y} width={b - a} height="17.200" fill={C.navy} /><rect x={620.200 + b} y={y} width={c - b} height="17.200" fill={C.orange} />
          <Label x="610" y={y + 12.500} a="end" w={w}>{n}</Label>
        </g>
      );
    })}
    <Label x="808.500" y="493" size={12} a="middle" w={204} font={DIN} fill={C.ink}>Confirmed, Active and Sum of Recovered</Label>
    <Label x="0" y="0" size={12} a="middle" w={78} font={DIN} fill={C.ink} transform="translate(457.500 387) rotate(-90)">Country/Region</Label>
    <rect x="1007" y="315" width="8" height="143" rx="4" fill="#efeeed" /><rect x="1007" y="315" width="8" height="4.500" rx="2.200" fill="#b5b3b1" />
  </svg>
);

const Gauge = () => (
  <svg width="427" height="72" viewBox="593 720.500 427 72">
    <path d={ring(802, 783.300, 58, 40, -90, 0)} fill={C.blue} /><path d={ring(802, 783.300, 58, 40, 0, 90)} fill="#f3f2f1" />
    <Label x="803" y="778.500" a="middle" size={15.500} w={30} fill="#7a7876">10M</Label>
    <Label x="715" y="783" size={15.500} w={23.500}>0M</Label><Label x="865" y="783" size={15.500} w={33}>20M</Label>
  </svg>
);

const COLS = [["Ameri...", 141, 850.300, 46], ["Europe", 182.600, 877.300, 42], ["Easter...", 224, 896.700, 45], ["South...", 266, 900.300, 44], ["Africa", 307.600, 905.300, 34], ["Weste...", 349, 906.300, 45]];
const Columns = () => (
  <svg width="336" height="136" viewBox="68 825 336 136">
    <path d="M124 850.700H396M124 909H396" stroke="#c8c6c4" strokeDasharray="1.500 6" />
    <Label x="114" y="855" a="end" w={18}>5M</Label><Label x="114" y="913" a="end" w={18}>0M</Label>
    {COLS.map(([n, x, y, w]) => (
      <g key={n}><rect x={x} y={y} width="32.800" height={909 - y} fill={C.blue} />
        <Label x="0" y="0" a="end" w={w} transform={`translate(${x + 12} 922.500) rotate(-35)`}>{n}</Label></g>
    ))}
    <Label x="0" y="0" a="middle" w={51} size={12} font={DIN} fill={C.ink} transform="translate(82.300 874) rotate(-90)">Confirmed</Label>
  </svg>
);

/* treemap geometry: 2.8 units per pixel across, 3 units per pixel down */
const tx = x => (x - 62) / 2.8, ty = y => (y - 120) / 3;
const AREAS = [[62, 120, 1450, 497, C.navy], [1452, 120, 2194, 497, C.purple], [2197, 120, 2679, 338, C.orange], [2194, 341, 2679, 497, C.pink], [2681, 120, 2814, 329, C.blue], [2681, 333, 2814, 497, C.violet]];
const VL = [[754, 120, 497], [1115, 120, 497], [1239, 120, 355], [1356, 120, 355], [1256, 355, 497], [1339, 355, 497], [1376, 355, 441], [1415, 355, 441], [1401, 441, 497], [1419, 441, 477], [1436, 441, 477], [1426, 477, 497],
  [1711, 120, 497], [1900, 120, 497], [2048, 120, 257], [2004, 258, 497], [2059, 258, 340], [2112, 258, 340], [2154, 258, 340], [2070, 340, 497], [2107, 340, 399], [2138, 340, 399], [2165, 340, 399], [2109, 400, 497], [2135, 400, 497], [2156, 400, 436], [2177, 400, 436], [2162, 436, 497], [2175, 436, 460], [2186, 436, 460], [2178, 460, 497],
  [2395, 120, 338], [2525, 120, 338], [2588, 120, 223], [2636, 120, 223], [2597, 223, 338], [2642, 223, 295], [2647, 295, 338], [2667, 295, 317], [2660, 317, 338], [2672, 317, 338],
  [2543, 341, 497], [2641, 341, 484], [2627, 484, 497], [2650, 484, 497], [2666, 484, 497],
  [2731, 223, 329], [2762, 223, 265], [2781, 223, 265], [2798, 223, 265], [2757, 265, 329], [2779, 265, 290], [2797, 265, 290], [2780, 290, 329], [2793, 290, 329], [2806, 290, 329],
  [2767, 333, 433], [2736, 433, 497], [2785, 433, 497]];
const HL = [[355, 1115, 1450], [435, 1115, 1256], [430, 1256, 1339], [441, 1339, 1450], [471, 1339, 1401], [477, 1401, 1450], [489, 1401, 1450],
  [373, 1452, 1711], [256, 1711, 1900], [388, 1711, 1900], [258, 1900, 2194], [324, 1900, 2004], [385, 1900, 2004], [448, 1900, 2004], [340, 2004, 2194], [381, 2004, 2070], [424, 2004, 2070], [460, 2004, 2070], [400, 2070, 2194], [436, 2070, 2194], [469, 2070, 2109], [471, 2109, 2135], [455, 2135, 2162], [470, 2135, 2162], [486, 2135, 2162], [460, 2162, 2194], [474, 2162, 2194], [486, 2162, 2194],
  [233, 2197, 2395], [265, 2395, 2525], [223, 2525, 2679], [286, 2525, 2597], [295, 2597, 2679], [319, 2597, 2647], [317, 2647, 2679], [484, 2543, 2679],
  [223, 2681, 2814], [270, 2681, 2731], [306, 2681, 2731], [265, 2731, 2814], [290, 2731, 2814], [310, 2731, 2757], [303, 2757, 2814], [316, 2757, 2814], [433, 2681, 2814], [471, 2736, 2785], [465, 2785, 2814], [492, 2785, 2814]];
const TL = [["Americas", 77, 178, 56, 13], ["Europe", 1468, 178, 43, 13], ["Eastern Mediterranean", 2209, 178, 139, 13], ["Africa", 2696, 178, 34.500, 13], ["South-East Asia", 2209, 400, 95.500, 13], ["Wes...", 2696, 390, 36, 13],
  ["US", 77, 483, 15, 12], ["Brazil", 771, 483, 29, 12], ["Peru", 1133, 342, 25, 12], ["Chile", 1254, 342, 28, 12], ["M...", 1373, 342, 21, 12], ["Cana...", 1133, 420, 37, 12], ["A...", 1271, 415, 18, 12], ["E...", 1272, 483, 15.500, 12],
  ["Russia", 1468, 357, 34, 12], ["United Kingd...", 1467, 483, 82, 12], ["Italy", 1727, 372, 23, 12], ["France", 1727, 483, 36, 12], ["Pakistan", 2210, 324, 46, 12], ["Sau...", 2410, 249, 30, 12], ["Qatar", 2410, 324, 31, 12], ["India", 2210, 483, 27, 12], ["Ba...", 2560, 468, 22, 12]];
const TreeBox = styled.div`padding: 5px 0 0 6px;`;
const Treemap = () => (
  <TreeBox>
    <svg width="984" height="126" viewBox="0 0 984 126">
      {AREAS.map(([a, b, c, d, f]) => <rect key={a + "-" + b} x={tx(a)} y={ty(b)} width={tx(c) - tx(a)} height={ty(d) - ty(b)} fill={f} />)}
      <g stroke="#fff" strokeOpacity=".42">
        {VL.map(([x, a, b], i) => <path key={i} d={`M${tx(x)} ${ty(a)}V${ty(b)}`} />)}
        {HL.map(([y, a, b], i) => <path key={i} d={`M${tx(a)} ${ty(y)}H${tx(b)}`} />)}
      </g>
      {TL.map(([t, x, y, w, s]) => <Label key={t} x={tx(x)} y={ty(y)} size={s} w={w} fill="#fff">{t}</Label>)}
    </svg>
  </TreeBox>
);

const DOTS = {
  [C.navy]: [[190, 324], [180, 493, 25], [165, 576], [270, 573], [266, 587], [273, 603], [293, 600], [305, 601], [337, 607], [342, 619], [350, 627], [343, 636], [223, 608], [216, 615], [225, 624], [235, 620], [241, 629], [244, 641], [262, 648], [291, 668], [322, 654], [352, 665], [367, 667], [269, 692], [286, 727, 9], [378, 734, 16], [329, 762], [356, 793], [366, 842]],
  [C.purple]: [[528, 300], [722, 305], [681, 322], [650, 329], [1038, 333, 12], [720, 360], [717, 376], [712, 388], [649, 382], [597, 398, 9], [574, 404], [731, 402], [693, 412], [633, 411], [627, 422], [635, 429], [652, 420], [674, 428], [692, 436], [742, 433], [732, 446], [619, 449, 9], [643, 448], [650, 447], [669, 443], [692, 447], [717, 455], [674, 455], [681, 462], [697, 463], [640, 467], [661, 465], [663, 479], [615, 476], [690, 473], [698, 480], [717, 474], [705, 493], [697, 487], [593, 488, 9], [574, 492], [762, 496, 9], [798, 479], [804, 489], [816, 489], [671, 513], [752, 519], [760, 541], [882, 481], [900, 439], [931, 482], [916, 498]],
  [C.orange]: [[650, 523], [582, 536], [686, 560], [738, 563], [775, 519], [765, 527], [768, 538], [798, 530], [844, 531, 9], [814, 549], [827, 565], [832, 571], [845, 576], [851, 592], [802, 575], [815, 614], [792, 632], [817, 650], [738, 613], [894, 525], [907, 548, 9]],
  [C.blue]: [[620, 554], [564, 593], [593, 607], [506, 618], [649, 607], [689, 617], [777, 617], [547, 622], [542, 629, 9], [601, 631], [560, 640], [558, 648], [568, 657], [585, 651], [603, 650], [613, 648], [619, 642], [644, 643], [664, 660], [697, 656], [740, 653], [780, 648], [637, 685], [654, 680], [660, 688], [674, 690], [711, 699], [738, 699], [739, 693], [748, 680], [773, 684], [759, 715], [849, 707, 9], [796, 739], [684, 741], [729, 747], [757, 745], [763, 765], [738, 773], [810, 774], [858, 778], [683, 788], [711, 788], [744, 810], [718, 821], [730, 824]],
  [C.pink]: [[973, 554], [1000, 558], [1000, 576], [952, 583, 11], [1027, 590], [1046, 618], [958, 652], [925, 689], [1102, 687], [1154, 726]],
  [C.violet]: [[1055, 448], [1058, 510], [1162, 510], [1206, 510], [1114, 592], [1058, 602], [1063, 629], [1077, 626], [1149, 652], [1105, 665], [1051, 668], [1058, 680], [1233, 716], [1190, 804], [1379, 767]],
};
const LAND = [
  "M38 225L90 205 140 198H230L262 232 300 255 325 285 335 315 305 325 345 375 365 410 368 440 340 450 300 470 292 492 270 515 256 530 260 556 250 548 238 530 205 532 188 545 183 575 195 595 218 588 215 606 235 618 250 642 268 652 258 660 235 642 205 615 170 605 145 580 120 540 95 520 72 480 68 430 55 408 38 395Z",
  "M225 198H300L340 225 350 262 340 295 318 268 285 240 250 225Z",
  "M255 700L270 655 290 632 320 640 365 655 395 688 440 700 458 718 440 762 425 798 400 812 385 845 365 890H300L303 800 298 768 275 735Z",
  "M575 540L600 526 650 517 672 520 682 545 720 543 755 548 765 580 783 620 800 642 832 642 818 680 785 718 782 770 757 800 745 835 715 860 692 858 668 790 665 735 650 702 645 668 610 658 570 665 548 638 535 602 545 568Z",
  "M800 768L826 738 822 790 806 802Z",
  "M566 500L568 470 602 468 612 440 640 425 652 392 666 404 692 400 712 388 714 358 742 340 706 340 692 378 674 388 660 352 640 346 638 320 680 262 724 232 780 250 776 290 820 286 850 262 900 250 930 240 970 212 1050 190H1230L1360 236 1420 262 1516 226V290L1462 330 1440 380 1416 350 1380 322 1330 326 1298 372 1240 400 1220 436 1190 458 1162 452 1150 472 1158 506 1136 516 1142 560 1110 592 1080 600 1086 632 1062 652 1046 616 1040 650 1064 684 1050 684 1024 622 1008 588 985 572 962 604 946 654 924 602 905 577 870 562 846 556 864 590 822 628 794 636 772 582 758 546 768 512 728 510 706 496 700 506 682 472 660 470 676 496 668 500 644 472 622 480 596 504Z",
  "M1102 800L1130 776 1160 762 1190 740 1216 754 1226 738 1242 772 1272 806 1274 850 1250 890H1210L1180 860 1120 872 1104 840Z",
  "M1188 694L1230 702 1272 730 1240 736 1206 718Z", "M1084 676L1118 652 1126 690 1098 706Z", "M1028 664L1072 712 1060 716 1030 682ZM1072 716L1130 724 1128 731 1074 724Z",
  "M1172 516L1206 496 1224 458 1236 464 1216 512Z", "M580 412L590 362 606 382 616 410Z", "M514 292L540 288 546 302 522 308Z", "M1130 610L1146 612 1152 650 1140 646Z",
];
const SEAS = ["M200 312L250 304 262 335 252 360 234 386 222 350 202 338Z", "M744 478L776 466 800 484 760 494Z", "M830 456L846 452 850 500 836 498Z", "M262 452L290 446 286 458 264 460Z"];
const PLACES = [["NORTH AMERICA", 38, 410, 278], ["SOUTH AMERICA", 249, 769, 276], ["EUROPE", 647, 428, 127], ["AFRICA", 660, 669, 115], ["ASIA", 1020, 398, 75], ["AUSTRALIA", 1127, 794, 180]];
const OCEANS = [["Atlantic", 357, 532, 138], ["Ocean", 373, 571, 108], ["Pacific", 1394, 527, 114], ["Ocean", 1398, 565, 108], ["Indian", 896, 773, 110], ["Ocean", 897, 810, 108]];
const WorldMap = () => (
  <svg width="506" height="227" viewBox="38 198 1468 681" preserveAspectRatio="none">
    <defs>
      <filter id="coast" x="20" y="180" width="1510" height="720" filterUnits="userSpaceOnUse">
        <feTurbulence type="fractalNoise" baseFrequency=".035" numOctaves="4" seed="4" result="n" />
        <feDisplacementMap in="SourceGraphic" in2="n" scale="24" xChannelSelector="R" yChannelSelector="G" result="d" />
        <feColorMatrix in="n" type="matrix" values="0 0 0 0 0.04  0 0 0 0 0.07  0 0 0 0 0.03  1.7 0 0 0 -.72" result="shade" />
        <feComposite in="shade" in2="d" operator="in" result="m" />
        <feMerge><feMergeNode in="d" /><feMergeNode in="m" /></feMerge>
      </filter>
      <filter id="soft" x="-30%" y="-30%" width="160%" height="160%"><feGaussianBlur stdDeviation="14" /></filter>
      <clipPath id="landclip">{LAND.map(d => <path key={d} d={d} />)}</clipPath>
    </defs>
    <rect x="38" y="198" width="1468" height="681" fill="#04121f" />
    <g fill="#0a2a3c" filter="url(#soft)"><path d="M330 300L520 420 500 560 420 700 470 879H560L600 560 560 320Z" opacity=".2" /><path d="M560 300h70v80h-70zM800 210h130v60H800zM1120 600h90v90h-80z" opacity=".6" /></g>
    <g filter="url(#coast)">
      {LAND.map(d => <path key={d} d={d} fill="#5d6449" />)}
      <g clipPath="url(#landclip)">
        <g filter="url(#soft)">
          <path d="M530 520H780L800 625H540Z" fill="#9a8868" /><path d="M758 520L910 540 860 620 800 640Z" fill="#94825f" />
          <path d="M840 440L1120 460 1090 510 960 530 850 500Z" fill="#877d62" /><path d="M640 660L800 650 770 720 650 730Z" fill="#3f5531" />
          <path d="M1100 770h170v80h-160z" fill="#8a7055" /><path d="M70 440L170 430 180 570 130 560Z" fill="#837c60" />
          <path d="M270 650h150v90H280z" fill="#38502f" /><path d="M300 780h60v90h-60z" fill="#8a7b5f" /><path d="M38 200H240L330 300 60 330Z" fill="#666e5a" />
          <path d="M780 330L1200 320 1180 400 800 400Z" fill="#4e5b3a" />
        </g>
      </g>
      {SEAS.map(d => <path key={d} d={d} fill="#0a2233" />)}
    </g>
    <path d="M368 198H510L506 212 496 222 500 232 484 240 478 256 462 262 450 270 436 276 430 292 424 304 424 322 416 346 402 336 396 322 388 306 390 288 380 268 384 250 374 226Z" fill="#efefed" />
    {Object.entries(DOTS).map(([c, list]) => (
      <g key={c} fill={c} fillOpacity=".66" stroke={c} strokeWidth="2.600">
        {list.map(([x, y, r = 7], i) => <circle key={i} cx={x} cy={y} r={r} />)}
      </g>
    ))}
    <g stroke="#1b1b1b" strokeWidth="3" paintOrder="stroke" fontWeight="600">
      {PLACES.map(([t, x, y, w]) => <Label key={t} x={x} y={y} w={w} size={37} fill="#fff">{t}</Label>)}
    </g>
    <g stroke="#06121f" strokeWidth="3" paintOrder="stroke" fontWeight="600">
      {OCEANS.map(([t, x, y, w]) => <Label key={t + x} x={x} y={y} w={w} size={35} fill="#a9bccb">{t}</Label>)}
    </g>
    <path d="M55 796l11 5v36l10-5-6-3-4-10 24 10v12L66 852l-11-7z" fill="#fff" />
    <Label x="104" y="837" size={38} w={79} fill="#fff">Bing</Label>
    <g stroke="#000" strokeWidth="3" paintOrder="stroke">
      <Label x="246" y="860" size={28} w={1097} font={`"Liberation Sans", sans-serif`} fill="#fff">Earthstar Geographics SIO, © 2020 TomTom, © 2020 HERE, © 2020 Microsoft Corporation</Label>
      <Label x="1360" y="860" size={28} w={72} font={`"Liberation Sans", sans-serif`} fill="#fff" textDecoration="underline">Terms</Label>
    </g>
  </svg>
);

const ROWS = [["Africa", "277127", 3, "129375", 0, "5775", "6", "#deefff"], ["Americas", "5036461", 66, "2692464", 1, "244653", "72", "#d9b300"], ["Eastern Mediterranean", "1023628", 13, "347249", 0, "23419", "18", "#dce5d2"], ["Europe", "2692785", 35, "974316", 1, "196813", "39", "#dbd07e"], ["South-East Asia", "735853", 9, "249637", 0, "20694", "36", "#dcd898"]];
const StatusDot = ({ bad }) => (
  <svg width="20" height="20" viewBox="0 0 20 20"><circle cx="10" cy="10" r="9" fill={bad ? "#f4664f" : "#84c28a"} stroke={bad ? "#e8502f" : "#4ea558"} strokeWidth="1.200" />
    {bad ? <path d="M6 6l8 8M14 6l-8 8" stroke="#fff" strokeWidth="2.600" strokeLinecap="round" /> : null}</svg>
);

const Card = ({ w, title, n, label, size, ls, bg, h = 159, mt }) => (
  <Visual $w={w} $h={h} $bg={bg} $mt={mt}>
    <VisualTitle $line>{title}</VisualTitle>
    <CardBody><CardNumber $size={size} $ls={ls}>{n}</CardNumber><CardLabel>{label}</CardLabel></CardBody>
  </Visual>
);

const TaskIcons = {
  win: <svg width="33" height="33" viewBox="0 0 33 33" fill="#fff"><path d="M0 5L14.500 3V16H0zM15.500 2.800L33 0V16H15.500zM0 17H14.500V30.500L0 28.500zM15.500 17H33V33L15.500 30.600z" /></svg>,
  explorer: <svg width="40" height="38" viewBox="0 0 40 38"><path d="M4 5h12l2-4h5l1 4h10l3 3v27H3z" fill="#e9c763" /><path d="M6 2h9v5H6zM17 4h9v5h-9zM25 6h9v5h-9z" fill="#fff" stroke="#c9a84a" strokeWidth=".6" /><path d="M7 3h3v3H7z" fill="#3a9b50" /><path d="M18 5h3v2h-3z" fill="#d13438" /><path d="M27 7h3v2h-3z" fill="#2b88c8" /><path d="M1 12h12l2-4h24v26H2z" fill="#f8e3a0" stroke="#d9b85c" strokeWidth=".8" /><path d="M4 38V28q0-5 5-5h22q5 0 5 5v10l-7-1v-7H11v7z" fill="#8fc9ea" stroke="#4f9fd0" strokeWidth=".8" /></svg>,
  store: <svg width="38" height="38" viewBox="0 0 38 38"><rect width="38" height="38" fill="#008a00" /><path d="M5 16l27-5v22L12 34l-7-3z" fill="#fff" /><path d="M10 14q0-9 6-9 4 0 6 7M15 13q0-6 5-6 3 0 4 5" fill="none" stroke="#d6efd6" strokeWidth="1.500" /><path d="M9 18.500l5.500-.8v5H9zM16 17.500l6-1v6.200h-6zM9 24.500h5.500v5L9 28.500zM16 24.500h6v6.200l-6-1z" fill="#008a00" /></svg>,
  home: <svg width="38" height="33" viewBox="0 0 38 33"><path d="M19 0L38 18.500H32V33H22.500V23H15.500V33H6V18.500H0z" fill="#fff" /></svg>,
  chrome: <svg width="37" height="37" viewBox="0 0 37 37"><circle cx="18.500" cy="18.500" r="18" fill="#ffcd40" /><path d="M18.500 18.500L3 9.300A18 18 0 0 1 34.500 10.500H18.500z" fill="#de4f43" /><path d="M3 9.300A18 18 0 0 0 16.500 36.400L25 22.500H12z" fill="#1da261" /><path d="M34.300 10H18.500L26 22.500 17.500 36.500A18 18 0 0 0 34.300 10z" fill="#ffcd40" /><circle cx="18.500" cy="18.500" r="8.400" fill="#fff" /><circle cx="18.500" cy="18.500" r="6.800" fill="#4a8af4" /></svg>,
  firefox: <svg width="37" height="37" viewBox="0 0 37 37"><defs><linearGradient id="ff" x1=".8" y1="0" x2=".3" y2="1"><stop offset="0" stopColor="#ffe14d" /><stop offset=".45" stopColor="#ff9a1f" /><stop offset=".8" stopColor="#ff4a2b" /><stop offset="1" stopColor="#e31587" /></linearGradient></defs><path d="M2 11Q3 6 5 4q1 3 4 5 4-3 8-2Q21 5 24 0q3 6 7 9 6 6 5 13-2 14-17 15Q3 36 1 22 0 16 2 11z" fill="url(#ff)" /><circle cx="18" cy="18" r="8.500" fill="#2a3fc0" /><path d="M7 10q4-4 10-2-4 1-3 4l5 1q0 4-5 5 2 5 7 3 5-1 5-7 4 9-4 13-9 3-13-4-3-6-2-13z" fill="#ff8a1c" /><path d="M18 9q7-2 8 6l-4 2-5-4z" fill="#1a66e0" /></svg>,
  ie: <svg width="38" height="38" viewBox="0 0 38 38"><path d="M36 22H14q1 7 7 7 4 0 6-3h8q-4 10-15 10Q5 35 4 21 4 6 20 5q16 1 16 17zM14 16h12q-1-5-6-5t-6 5z" fill="#3fc0f0" stroke="#1c8fce" strokeWidth=".8" /><path d="M36 9Q38 1 31 1 22 2 11 14 0 27 1 34q1 4 8 1-5-1-3-7 4-9 12-16Q28 4 33 3q3 1 1 5z" fill="#f7c331" /></svg>,
  face: <svg width="34" height="40" viewBox="0 0 35 40"><path d="M5 1h20q1 1 1 9l8 14q0 4-8 4v10q0 1-2 1H5q-3 0-3-2V3q0-2 3-2z" fill="#231a17" stroke="#231a17" strokeWidth="2" /><path d="M7 3h15q2 0 2 7l9 14q0 3-8 3v8q0 3-2 3H7q-2 0-2-2V5q0-2 2-2z" fill="#dd4327" /><ellipse cx="15" cy="11.500" rx="4.500" ry="3.200" fill="#d6d0c8" stroke="#231a17" strokeWidth="1.200" /><circle cx="15" cy="11.500" r="2" fill="#231a17" /><path d="M16 24q5 5 12 3" fill="none" stroke="#231a17" strokeWidth="1.500" /></svg>,
  power: <svg width="40" height="40" viewBox="0 0 40 40"><rect width="40" height="40" fill={C.yellow} /><path d="M10 28q-3 0-3-3V14q0-3 3-3h20q3 0 3 3v11q0 3-3 3" fill="none" stroke="#252423" strokeWidth="1.600" /><path d="M13 30v-4M18 30v-7M23 30V19.500M28 30V17" stroke="#252423" strokeWidth="2.800" strokeLinecap="round" /></svg>,
};

export default function App() {
  return (
    <Shell>
      <Global />
      <TitleBar>
        <QuickTools>
          <svg width="19" height="19" viewBox="0 0 20 19" fill="none" stroke="#fff" strokeWidth="1.300"><path d="M1 1h18v17H4l-3-3zM4.500 1v7.500h12V1M6 18v-5h8v5" /></svg>
          <svg width="17" height="19" viewBox="0 0 18 19" fill="none" stroke="#fff" strokeWidth="1.400"><path d="M1 1v7h8M1 8L9 1.500Q13-.5 16 3q2.500 4-1 8L8 18.500" /></svg>
          <svg width="17" height="19" viewBox="0 0 18 19" fill="none" stroke="#7d7b78" strokeWidth="1.300"><path d="M17 1v7H9M17 8L9 1.500Q5-.5 2 3q-2.500 4 1 8l7 7.500" /></svg>
        </QuickTools>
        <Caption>COVID19 ANALYSIS - Power BI Desktop</Caption>
        <WindowTools>
          Sign in<Avatar />
          <WinGlyph><svg width="13" height="13" viewBox="0 0 13 13"><path d="M0 7h13" stroke="#fff" strokeWidth="1.600" /></svg></WinGlyph>
          <WinGlyph $gap={42}><svg width="13" height="13" viewBox="0 0 13 13" fill="none" stroke="#fff" strokeWidth="1.400"><path d="M1 3.500h8.500v8.500H1zM3.500 3V1H12v8.500H10" /></svg></WinGlyph>
          <WinGlyph $gap={42}><svg width="13" height="13" viewBox="0 0 13 13" stroke="#fff" strokeWidth="1.500"><path d="M.5.5l12 12M12.500.5l-12 12" /></svg></WinGlyph>
        </WindowTools>
      </TitleBar>

      <Ribbon>
        <Tabs>
          <Tab>File</Tab><Tab $on>Home</Tab><Tab>Insert</Tab><Tab>Modeling</Tab><Tab>View</Tab><Tab>Help</Tab><Tab $gold>Format</Tab><Tab $gold>Data / Drill</Tab>
        </Tabs>
        <Groups>
          <Group $w={201}>
            <GroupBody $pad={10}>
              <Big icon="paste" w={50} lines={["Paste"]} off />
              <SmallList>
                <SmallButton><SmallIcon><svg width="14" height="20" viewBox="0 0 14 20" fill="none"><path d="M3 0l6.500 14M11 0L4.500 14" stroke={K} strokeWidth="1.600" /><circle cx="3.500" cy="16.500" r="2.600" stroke="#2b78b8" strokeWidth="1.600" /><circle cx="10.500" cy="16.500" r="2.600" stroke="#2b78b8" strokeWidth="1.600" /></svg></SmallIcon>Cut</SmallButton>
                <SmallButton><SmallIcon><svg width="20" height="20" viewBox="0 0 20 20" fill="#fafafa" stroke={K} strokeWidth="1.400"><path d="M1 1h9v16H1z" /><path d="M7 4h7.500l5 5v10.500H7z" /><path d="M14 4v5h5M10 13h6M10 16h6" strokeWidth="1" /></svg></SmallIcon>Copy</SmallButton>
                <SmallButton><SmallIcon><svg width="20" height="19" viewBox="0 0 20 19"><path d="M1 8l7-2 6 6-6 6.500z" fill="#fbd49a" stroke="#d9730f" strokeWidth="1.500" /><path d="M3 11l6 6" stroke="#d9730f" strokeWidth="1.500" /><path d="M7.500 5l7 7 1.500-2-1.500-2.500L20 3.500 17.500.5 12.500 5 10 3.500z" fill="#fff" stroke={K} strokeWidth="1.300" /></svg></SmallIcon>Format painter</SmallButton>
              </SmallList>
            </GroupBody>
            <GroupName>Clipboard</GroupName>
          </Group>
          {GROUPS.map(g => (
            <Group key={g.name} $w={g.w}>
              <GroupBody $pad={g.pad}>{g.items.map(([i, w, l, m]) => <Big key={i} icon={i} w={w} lines={l} menu={m} />)}</GroupBody>
              <GroupName>{g.name}</GroupName>
            </Group>
          ))}
          <RibbonEnd><Chevron d="up" w={11} sw={2.2} s="#323130" /></RibbonEnd>
        </Groups>
      </Ribbon>

      <Body>
        <Rail>
          <RailItem $on><svg width="19" height="19" viewBox="0 0 19 19" fill="none" stroke="#323130" strokeWidth="1.400"><path d="M1 0V18H19M4.500 18V9h2.500v9M9 18V5.500h2.500V18M13.500 18V2h2.500v16" /></svg></RailItem>
          <RailItem><svg width="20" height="19" viewBox="0 0 20 19" fill="none" stroke="#605e5c" strokeWidth="1.200"><path d="M.6.6H19.400V18.400H.6zM.6 5H19.400M.6 9.500H19.400M.6 14H19.400M7 5V18.400M13 5V18.400" /></svg></RailItem>
          <RailItem><svg width="22" height="22" viewBox="0 0 22 22" fill="none" stroke="#605e5c" strokeWidth="1.300"><path d="M1 5h7v6H1zM14 1h7v7h-7zM14 14h7v7h-7zM8 8h3M14 4h-3v14h3M3 3h8" /></svg></RailItem>
        </Rail>

        <Work>
          <Stage>
            <Page>
              <Banner><BannerText>COVID-19 ANALYSIS</BannerText><Thumb $h={29} $m="5px 4px 0 0" /></Banner>
              <Upper>
                <LeftArea>
                  <RowTop>
                    <Visual $w={359} $h={248}><VisualTitle $wrap $px={15}>Confirmed, Active, Sum of Recovered and Deaths</VisualTitle><Donut /></Visual>
                    <Visual $w={577} $h={248}>
                      <VisualTitle>Confirmed, Active and Sum of Recovered by Country/Region</VisualTitle>
                      <BarLegend><LegendKey $c={C.blue}>Confirmed</LegendKey><LegendKey $c={C.navy}>Active</LegendKey><LegendKey $c={C.orange}>Sum of Recovered</LegendKey></BarLegend>
                      <StackedBars />
                    </Visual>
                  </RowTop>
                  <RowMid>
                    <Visual $w={516} $h={289} $mt={4}>
                      <VisualTitle $line>Confirmed by Country/Region and WHO Region</VisualTitle>
                      <MapLegend>
                        <b>WHO Region</b>
                        <LegendKey $c={C.blue}>Africa</LegendKey><LegendKey $c={C.navy}>Americas</LegendKey><LegendKey $c={C.orange}>Eastern Medit...</LegendKey><LegendKey $c={C.purple}>Europe</LegendKey><LegendKey $c={C.pink} $mr={13}>South-Eas...</LegendKey>
                        <svg width="6" height="11" viewBox="0 0 6 11"><path d="M0 0l6 5.500L0 11z" fill="#252423" /></svg>
                      </MapLegend>
                      <MapFrame><WorldMap /></MapFrame>
                    </Visual>
                    <Stack>
                      <Visual $w={436} $h={194}>
                        <Matrix>
                          <MatrixMain>
                            <MatrixRow $h={34.500}><HeadCell $sep>WHO Region</HeadCell><HeadCell>Confirmed</HeadCell><HeadCell>Active</HeadCell><HeadCell $sep>Deaths</HeadCell><HeadCell>Recovered</HeadCell></MatrixRow>
                            <MatrixRows>
                              {ROWS.map(([n, c, bw, a, bad, d, r, bg]) => (
                                <MatrixRow key={n}>
                                  <RowHead>{n}</RowHead>
                                  <Cell><DataBar style={{ width: bw }} /><CellText>{c}</CellText></Cell>
                                  <Cell $pr={3}>{a}</Cell>
                                  <Cell $pr={5}><Mark><StatusDot bad={bad} /></Mark>{d}</Cell>
                                  <Cell $pr={20} $bg={bg}>{r}</Cell>
                                </MatrixRow>
                              ))}
                            </MatrixRows>
                            <MatrixRow $h={25} $bold><RowHead>Total</RowHead><Cell $plain>9978794</Cell><Cell $plain $pr={3}>4496690</Cell><Cell $plain $pr={5}>498694</Cell><Cell $plain $pr={21}>72</Cell></MatrixRow>
                          </MatrixMain>
                          <VScroll><Chevron d="up" w={8} sw={1.500} /><VThumb /><Chevron w={8} sw={1.500} /></VScroll>
                        </Matrix>
                        <HScroll><Chevron d="left" w={4.500} sw={1.500} /><HThumb /><Chevron d="right" w={4.500} sw={1.500} /></HScroll>
                      </Visual>
                      <Visual $w={427.500} $h={94}><VisualTitle>Confirmed</VisualTitle><Gauge /></Visual>
                    </Stack>
                  </RowMid>
                </LeftArea>
                <RightArea>
                  <Pair $mb={14}>
                    <Card w={196} title="Total confirmed case" n="9978794" label="Confirmed" size={42} ls={3.600} bg="#cccccc" />
                    <Card w={185} title="Death" n="498694" label="Deaths" size={43.500} ls={4.300} bg="#cccccc" mt={1} />
                  </Pair>
                  <Pair $ml={1} $mb={12}>
                    <Card w={195} h={156} title="Sum of recovered" n="4983410" label="Sum of Recovered" size={43.500} ls={4.300} bg="#b3b3b3" />
                    <Card w={185} h={156} title="Sum of Active" n="4496690" label="Active" size={43.500} ls={4.300} bg="#cccccc" />
                  </Pair>
                  <Pair $ml={1}>
                    <Visual $w={195} $h={188}>
                      <VisualTitle $line>WHO</VisualTitle><SlicerHead>WHO Region</SlicerHead>
                      <SlicerBody><SlicerList>{["Africa", "Americas", "Eastern Mediterranean", "Europe", "South-East Asia", "Western Pacific"].map(t => <SlicerItem key={t}>{t}</SlicerItem>)}</SlicerList></SlicerBody>
                    </Visual>
                    <Visual $w={185} $h={188}>
                      <VisualTitle $line>Region</VisualTitle><SlicerHead>Country/Region</SlicerHead>
                      <SlicerBody><SlicerList>{["Afghanistan", "Albania", "Algeria", "Andorra", "Angola", "Antigua and Barbuda", "Argentina"].map(t => <SlicerItem key={t}>{t}</SlicerItem>)}</SlicerList><Thumb $h={21} $m="0 4px 0 -20px" $c="#d8d6d5" /></SlicerBody>
                    </Visual>
                  </Pair>
                </RightArea>
              </Upper>
              <LowerRow>
                <Visual $w={336} $h={157}>
                  <VisualTitle>Confirmed by WHO Region</VisualTitle>
                  <Columns />
                  <Handles>
                    <svg width="336" height="157" viewBox="0 0 336 157" fill="none" stroke="#999"><path d="M.5.5h335v156H.5z" stroke="#c8c6c4" /><path d="M1.500 11V2H11M325 2h9.500v9M1.500 146v9.500H11M325 155.500h9.500V146M160 2h15M1.500 71v15M334 71v15M160 156h15" strokeWidth="3.500" /></svg>
                  </Handles>
                  <HoverTools>
                    <HoverTool><svg width="20" height="18" viewBox="0 0 20 18" fill="none" stroke="#8a8886" strokeWidth="1.300"><path d="M1 1h18l-7 8v8H8V9z" /></svg></HoverTool>
                    <HoverTool><svg width="19" height="17" viewBox="0 0 19 17" fill="none" stroke="#8a8886" strokeWidth="1.300"><path d="M8 1H1v15h17v-6M1 9h8v7M11 1h7v6M18 1l-8 7" /></svg></HoverTool>
                    <HoverTool><svg width="20" height="4" viewBox="0 0 20 4" fill="#8a8886"><circle cx="2" cy="2" r="1.400" /><circle cx="10" cy="2" r="1.400" /><circle cx="18" cy="2" r="1.400" /></svg></HoverTool>
                  </HoverTools>
                </Visual>
                <Visual $w={994} $h={157}><VisualTitle $line>Confirmed by WHO Region and Country/Region</VisualTitle><Treemap /></Visual>
              </LowerRow>
            </Page>
          </Stage>
          <PageTabs>
            <PageArrows>
              <svg width="6" height="11" viewBox="0 0 6 11"><path d="M6 0L0 5.500 6 11z" fill="#c8c6c4" /></svg>
              <svg width="6" height="11" viewBox="0 0 6 11"><path d="M0 0l6 5.500L0 11z" fill="#c8c6c4" /></svg>
            </PageArrows>
            <PageTab>COVID19</PageTab>
            <AddPage><svg width="14" height="14" viewBox="0 0 14 14"><path d="M7 0v14M0 7h14" stroke="#777467" strokeWidth="3.600" /></svg></AddPage>
          </PageTabs>
        </Work>

        <Filters>
          <Chevron d="left" w={8} />
          <FilterGlyph><svg width="14" height="15" viewBox="0 0 14 15" fill="none" stroke="#484644"><path d="M13.500.5v14L7 9H.5V6H7z" /></svg></FilterGlyph>
          <FiltersWord>Filters</FiltersWord>
        </Filters>

        <Pane $w={226}>
          <PaneHead>Visualizations<Chevron d="right" w={8} /></PaneHead>
          <IconGrid>{VIZ.map((v, i) => <IconSlot key={i} $on={i === 1}><svg width="21" height="20" viewBox="0 0 20 20">{v}</svg></IconSlot>)}</IconGrid>
          <PaneTabs>
            <PaneTab><svg width="25" height="24" viewBox="0 0 25 24" fill="none" stroke="#323130" strokeWidth="1.400"><path d="M0 1h20" /><path d="M.7 4.500h23.600v6H.7zM.7 16h23.600v7H.7zM.7 10v7M24.300 10v7" strokeDasharray="2.400 1.500" /></svg></PaneTab>
            <PaneTab $on><svg width="23" height="25" viewBox="0 0 23 25" fill="none" stroke="#323130" strokeWidth="1.400"><path d="M1 1h17v7H1zM18 3h4.300v7.500H11V14M8.500 14h5v10.300h-5z" /></svg></PaneTab>
            <PaneTab><svg width="26" height="25" viewBox="0 0 26 25" fill="none" stroke="#323130" strokeWidth="1.400"><circle cx="11" cy="11" r="10" /><path d="M18 18l7 7M2 12l5-3 3 3 8-7M7 19v-6M11 20v-6M15 19v-8" /></svg></PaneTab>
          </PaneTabs>
          <Search $m="4px 5px 4px 5px"><Magnifier />Search</Search>
          <FormatList>
            {FORMAT.map(([n, s]) => (
              <FormatRow key={n} $pr={s === "warn" ? 31 : 35}>
                <Chevron d={n === "Title" ? "up" : "down"} /><RowName>{n}</RowName>
                {s === "warn" && <WarnSlot><Warning /></WarnSlot>}
                {(s === "On" || s === "Off") && <RowState>{s}</RowState>}
                {s && <Toggle on={s !== "Off"} />}
              </FormatRow>
            ))}
            <SubPanel>
              <SubLabel>Title text</SubLabel>
              <FieldLine><TextInput>Confirmed by WH...</TextInput><FxButton>fx</FxButton></FieldLine>
              <SubLabel>Word wrap</SubLabel>
              <WrapLine><RowState>On</RowState><Toggle /></WrapLine>
            </SubPanel>
            <FormatScroll />
          </FormatList>
        </Pane>

        <Pane $w={225}>
          <PaneHead>Fields<Chevron d="right" w={8} /></PaneHead>
          <Search $m="3px 4px 5px 5px"><Magnifier />Search</Search>
          <FieldsBody>
            <Dataset>
              <Chevron d="up" />
              <DatasetIcon>
                <svg width="24" height="24" viewBox="0 0 24 24"><path d="M1 1h15v14H1z" fill="#fff" stroke="#323130" strokeWidth="1.500" /><path d="M1 1h15v3.500H1z" fill="#323130" /><path d="M1 8h15M1 11.500h15M6 4v11M11 4v11" stroke="#323130" /><circle cx="16.500" cy="16.500" r="7.200" fill={C.yellow} /><path d="M13.500 16.500l2 2 3.500-3.500" fill="none" stroke="#323130" strokeWidth="1.800" /></svg>
              </DatasetIcon>
              datasets_494766...
            </Dataset>
            {FIELDS.map(([n, sum, on], i) => (
              <FieldRow key={i}>
                <Check $on={on}>{on ? <svg width="12" height="12" viewBox="0 0 12 12"><path d="M2.500 6l2.500 2.500 5-5" fill="none" stroke="#323130" strokeWidth="1.300" /></svg> : null}</Check>
                <Sigma>{sum ? <svg width="12" height="13" viewBox="0 0 12 13"><path d="M11 3.500V1H1l6 5.500L1 12h10V9.500" fill="none" stroke="#323130" strokeWidth="1.700" /></svg> : null}</Sigma>
                {n}
              </FieldRow>
            ))}
          </FieldsBody>
        </Pane>
      </Body>

      <StatusBar>PAGE 1 OF 1</StatusBar>

      <Taskbar>
        <Apps>
          <AppSlot $w={34} $ml={13}>{TaskIcons.win}</AppSlot>
          <AppSlot $w={70} $ml={14} $open $stack>{TaskIcons.explorer}</AppSlot>
          <AppSlot $w={38} $ml={19}>{TaskIcons.store}</AppSlot>
          <AppSlot $w={38} $ml={35}>{TaskIcons.home}</AppSlot>
          <AppSlot $w={70} $ml={19} $open>{TaskIcons.chrome}</AppSlot>
          <AppSlot $w={37} $ml={20}>{TaskIcons.firefox}</AppSlot>
          <AppSlot $w={38} $ml={35}>{TaskIcons.ie}</AppSlot>
          <AppSlot $w={70} $ml={19} $open>{TaskIcons.face}</AppSlot>
          <AppSlot $w={70} $ml={3} $active $stack>{TaskIcons.power}</AppSlot>
        </Apps>
        <Tray>
          <TrayIcons>
            <TrayArrow><svg width="9" height="5" viewBox="0 0 9 5"><path d="M0 5l4.500-5L9 5z" fill="#fff" /></svg></TrayArrow>
            <svg width="12" height="19" viewBox="0 0 12 19" fill="none" stroke="#fff" strokeWidth="1.400"><path d="M4 2V.7h4V2M1 2.500h10v15.500H1z" /><path d="M3 8h6v8H3z" fill="#fff" stroke="none" /></svg>
            <svg width="16" height="16" viewBox="0 0 16 16" fill="#fff"><path d="M0 13h2.400v3H0zM3.300 10.500h2.400V16H3.300zM6.600 7.500H9V16H6.600zM9.900 4h2.400v12H9.900zM13.200 0h2.400v16h-2.400z" /></svg>
            <svg width="19" height="18" viewBox="0 0 19 18"><path d="M0 5h4l5-5v18l-5-5H0z" fill="#fff" /><path d="M11 6q2 3 0 6M13.500 4q3.500 5 0 10M16 2.500q4 6.500 0 13" fill="none" stroke="#fff" strokeWidth="1.200" /></svg>
          </TrayIcons>
          <TrayText $w={30}>ENG<br />US</TrayText>
          <TrayText $w={82} $ml={16}>08:31<br />02-07-2020</TrayText>
        </Tray>
      </Taskbar>
    </Shell>
  );
}
